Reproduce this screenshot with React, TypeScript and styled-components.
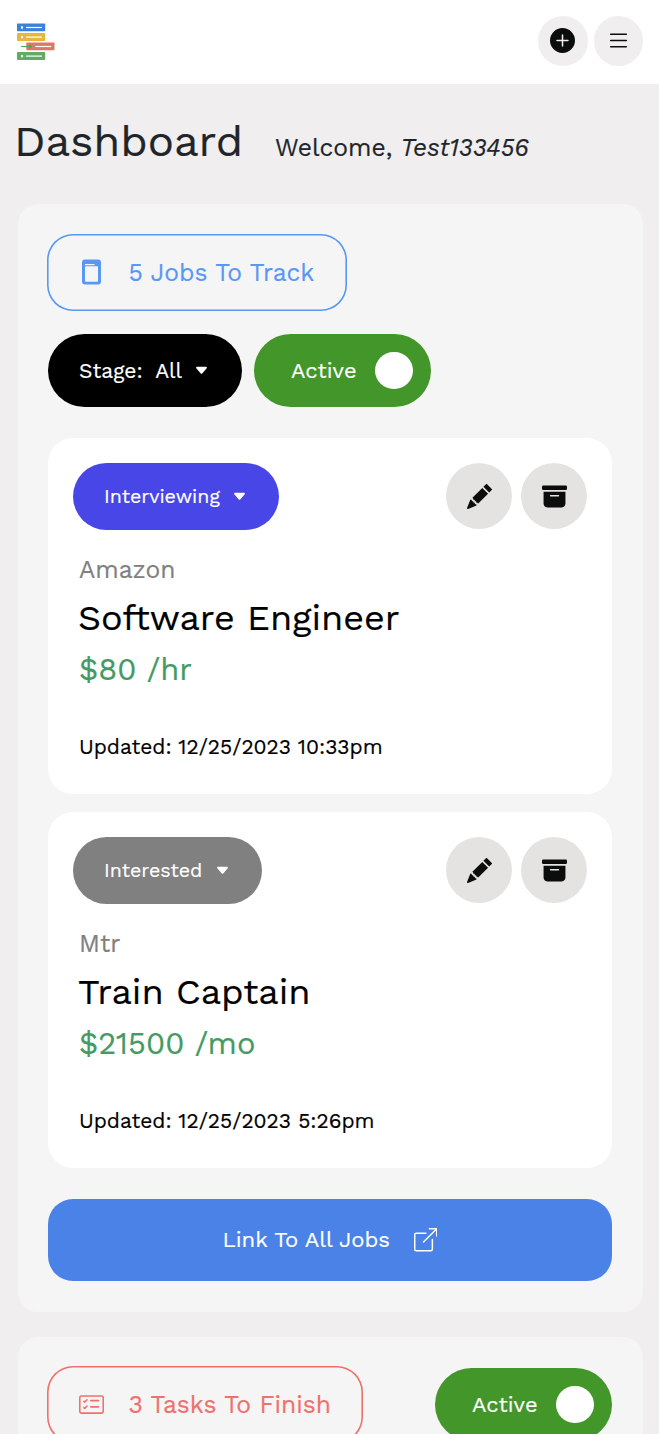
import React from "react";
import styled, { createGlobalStyle } from "styled-components";
import {
  BsArchiveFill,
  BsBoxArrowUpRight,
  BsCardChecklist,
  BsCaretDownFill,
  BsList,
  BsPencilFill,
  BsPlusCircleFill,
} from "react-icons/bs";

const GlobalStyle = createGlobalStyle`
  * { box-sizing: border-box; }
  html, body { margin: 0; height: 1434px; overflow: hidden; }
  body {
    background: #f0eeef;
    color: #212529;
    font-family: "Work Sans", Inter, "Liberation Sans", sans-serif;
    -webkit-text-stroke: 0.2px currentColor;
  }
  button { font-family: inherit; border: 0; margin: 0; padding: 0; }
  svg { display: block; flex: none; }
`;

const Page = styled.div`
  height: 1434px;
  overflow: hidden;
`;

const TopBar = styled.header`
  height: 84px;
  padding: 0 16px 2px 16px;
  background: #fff;
  display: flex;
  align-items: center;
  justify-content: space-between;
`;

const TopActions = styled.div`
  display: flex;
  gap: 6px;
`;

const RoundButton = styled.button<{ $size: number; $bg: string }>`
  width: ${(p) => p.$size}px;
  height: ${(p) => p.$size}px;
  border-radius: 50%;
  background: ${(p) => p.$bg};
  color: #0b0c0c;
  display: flex;
  align-items: center;
  justify-content: center;
`;

const NavButton = styled(RoundButton)`
  padding-bottom: 1px;
`;

const Heading = styled.div`
  height: 120px;
  padding: 31px 0 0 14px;
  display: flex;
  align-items: baseline;
`;

const Label = styled.span<{ $size: number; $weight?: number }>`
  font-size: ${(p) => p.$size}px;
  font-weight: ${(p) => p.$weight ?? 400};
  white-space: nowrap;
`;

const Title = styled.h1`
  width: 261px;
  margin: 0;
  font-size: 43.7px;
  line-height: 53px;
  font-weight: 400;
`;

const Panel = styled.section<{ $height: number; $top: number }>`
  height: ${(p) => p.$height}px;
  margin: 0 16px 25px 18px;
  padding: ${(p) => p.$top}px 31px 0 30px;
  border-radius: 20px;
  background: #f5f5f5;
`;

const PanelTop = styled.div`
  display: flex;
  justify-content: space-between;
  align-items: center;
`;

const Summary = styled.div<{ $color: string; $width: number }>`
  width: ${(p) => p.$width}px;
  height: 77px;
  margin-left: -1.5px;
  padding-left: 32px;
  box-shadow: inset 0 0 0 1.6px ${(p) => p.$color};
  border-radius: 26px;
  color: ${(p) => p.$color};
  display: flex;
  align-items: center;
`;

const SummaryIcon = styled.span`
  width: 50px;
`;

const Filters = styled.div`
  display: flex;
  gap: 12px;
  margin: 23px 0 31px;
`;

const StageFilter = styled.button`
  width: 194px;
  height: 73.5px;
  padding-left: 31px;
  border-radius: 37px;
  background: #000;
  color: #fff;
  display: flex;
  align-items: center;
`;

const ActiveToggle = styled.button`
  width: 177px;
  height: 73.5px;
  padding: 0 18.5px 0 37px;
  border-radius: 37px;
  background: #43962a;
  color: #fff;
  display: flex;
  align-items: center;
  justify-content: space-between;
`;

const Knob = styled.span`
  width: 37.5px;
  height: 37.5px;
  border-radius: 50%;
  background: #fff;
`;

const Card = styled.article`
  height: 356px;
  margin-bottom: 18.4px;
  padding: 25px;
  border-radius: 25px;
  background: #fff;
  color: #000;
`;

const CardTop = styled.div`
  height: 67px;
  display: flex;
  justify-content: space-between;
`;

const CardActions = styled.div`
  display: flex;
  gap: 9px;
`;

const StagePill = styled.button<{ $bg: string; $width: number }>`
  width: ${(p) => p.$width}px;
  height: 66.5px;
  padding: 0 32px 0 31px;
  border-radius: 34px;
  background: ${(p) => p.$bg};
  color: #fff;
  display: flex;
  align-items: center;
  justify-content: space-between;
`;

const Details = styled.div`
  padding: 24px 0 0 5px;
  display: flex;
  flex-direction: column;
`;

const Company = styled.div`
  padding-left: 1px;
  height: 32px;
  line-height: 32px;
  color: #808080;
`;

const Role = styled.div`
  height: 63px;
  line-height: 64px;
`;

const Pay = styled.div`
  padding-left: 1px;
  height: 40px;
  line-height: 40px;
  color: #459a63;
`;

const Updated = styled.div`
  margin-top: 43px;
  padding-left: 1px;
  height: 30px;
  line-height: 30px;
`;

const LinkButton = styled.button`
  width: 100%;
  height: 82px;
  margin-top: 30.5px;
  border-radius: 25px;
  background: #4a82e8;
  color: #fff;
  display: flex;
  align-items: center;
  justify-content: center;
  gap: 24px;
`;

const JobList = styled.div`
  ${Card}:last-child { margin-bottom: 0; }
`;

const shelves = [
  { x: 1, y: 1, color: "#3a80dc" },
  { x: 1, y: 10.6, color: "#e5b73f" },
  { x: 10.3, y: 20, color: "#dc7868" },
  { x: 1, y: 29.6, color: "#5fac62" },
];

const Logo = () => (
  <svg width="40" height="40" viewBox="0 -1.5 40 40">
    {shelves.map((s, i) => (
      <g key={i}>
        <rect x={s.x} y={s.y} width="28.2" height="7.8" rx="0.7" fill={s.color} />
        <path d={`M${s.x + 9} ${s.y + 4}h16`} stroke="#fff" strokeWidth="1.2" />
        {i !== 2 && <rect x={s.x + 4} y={s.y + 2.8} width="2" height="2.4" fill="#fff" />}
      </g>
    ))}
    <path d="M5.2 24H13" stroke="#4fa653" strokeWidth="1.2" />
    <path d="M13 21.2l3.4 2.8-3.4 2.8z" fill="#4fa653" />
  </svg>
);

const Notebook = () => (
  <svg width="25" height="26" viewBox="0 0 25 26">
    <path
      fill="currentColor"
      fillRule="evenodd"
      d="M6 .5h13a3 3 0 0 1 3 3v19a3 3 0 0 1-3 3H6a3 3 0 0 1-3-3v-19a3 3 0 0 1 3-3zM6 5v1.3h9.5V5zM6.8 7.3a.8.8 0 0 0-.8.8v13.7c0 .6.3.9.9.9h11.2c.6 0 .9-.3.9-.9V8.1a.8.8 0 0 0-.8-.8z"
    />
  </svg>
);

const CaretLabel = styled.span`
  padding-top: 1px;
  display: flex;
  align-items: center;
`;

const CaretGap = styled.span`
  width: 12.5px;
`;

interface Job {
  stage: string;
  color: string;
  pillWidth: number;
  company: string;
  role: string;
  pay: string;
  updated: string;
}

const jobs: Job[] = [
  {
    stage: "Interviewing", color: "#4946e8", pillWidth: 206,
    company: "Amazon", role: "Software Engineer",
    pay: "$80 /hr", updated: "12/25/2023 10:33pm",
  },
  {
    stage: "Interested", color: "#808080", pillWidth: 188.5,
    company: "Mtr", role: "Train Captain",
    pay: "$21500 /mo", updated: "12/25/2023 5:26pm",
  },
];

const JobCard = ({ job }: { job: Job }) => (
  <Card>
    <CardTop>
      <StagePill $bg={job.color} $width={job.pillWidth}>
        <Label $size={19.6} $weight={450}>{job.stage}</Label>
        <BsCaretDownFill size={15} />
      </StagePill>
      <CardActions>
        <RoundButton $size={66} $bg="#e4e3e1"><BsPencilFill size={25} /></RoundButton>
        <RoundButton $size={66} $bg="#e4e3e1"><BsArchiveFill size={25} /></RoundButton>
      </CardActions>
    </CardTop>
    <Details>
      <Company><Label $size={24.6}>{job.company}</Label></Company>
      <Role><Label $size={36}>{job.role}</Label></Role>
      <Pay><Label $size={30.8}>{job.pay}</Label></Pay>
      <Updated><Label $size={20.95}>Updated: {job.updated}</Label></Updated>
    </Details>
  </Card>
);

const Toggle = () => (
  <ActiveToggle>
    <Label $size={21.9} $weight={450}>Active</Label>
    <Knob />
  </ActiveToggle>
);

export default function App() {
  return (
    <Page>
      <GlobalStyle />
      <TopBar>
        <Logo />
        <TopActions>
          <NavButton $size={49.5} $bg="#f0eeef"><BsPlusCircleFill size={25} /></NavButton>
          <NavButton $size={49.5} $bg="#f0eeef"><BsList size={25} /></NavButton>
        </TopActions>
      </TopBar>
      <Heading>
        <Title>Dashboard</Title>
        <Label $size={24.6}>Welcome, <em>Test133456</em></Label>
      </Heading>
      <Panel $height={1108} $top={29.5}>
        <PanelTop>
          <Summary $color="#5997f5" $width={300.5}>
            <SummaryIcon><Notebook /></SummaryIcon>
            <Label $size={24.6}>5 Jobs To Track</Label>
          </Summary>
        </PanelTop>
        <Filters>
          <StageFilter>
            <CaretLabel>
              <Label $size={21} $weight={450}>Stage:</Label>
              <CaretGap />
              <Label $size={21} $weight={450}>All</Label>
              <CaretGap />
              <BsCaretDownFill size={15} />
            </CaretLabel>
          </StageFilter>
          <Toggle />
        </Filters>
        <JobList>
          {jobs.map((job) => <JobCard key={job.role} job={job} />)}
        </JobList>
        <LinkButton>
          <Label $size={22} $weight={450}>Link To All Jobs</Label>
          <BsBoxArrowUpRight size={23.5} />
        </LinkButton>
      </Panel>
      <Panel $height={300} $top={29}>
        <PanelTop>
          <Summary $color="#ee716c" $width={316.5}>
            <SummaryIcon><BsCardChecklist size={25} /></SummaryIcon>
            <Label $size={24.6}>3 Tasks To Finish</Label>
          </Summary>
          <Toggle />
        </PanelTop>
      </Panel>
    </Page>
  );
}
